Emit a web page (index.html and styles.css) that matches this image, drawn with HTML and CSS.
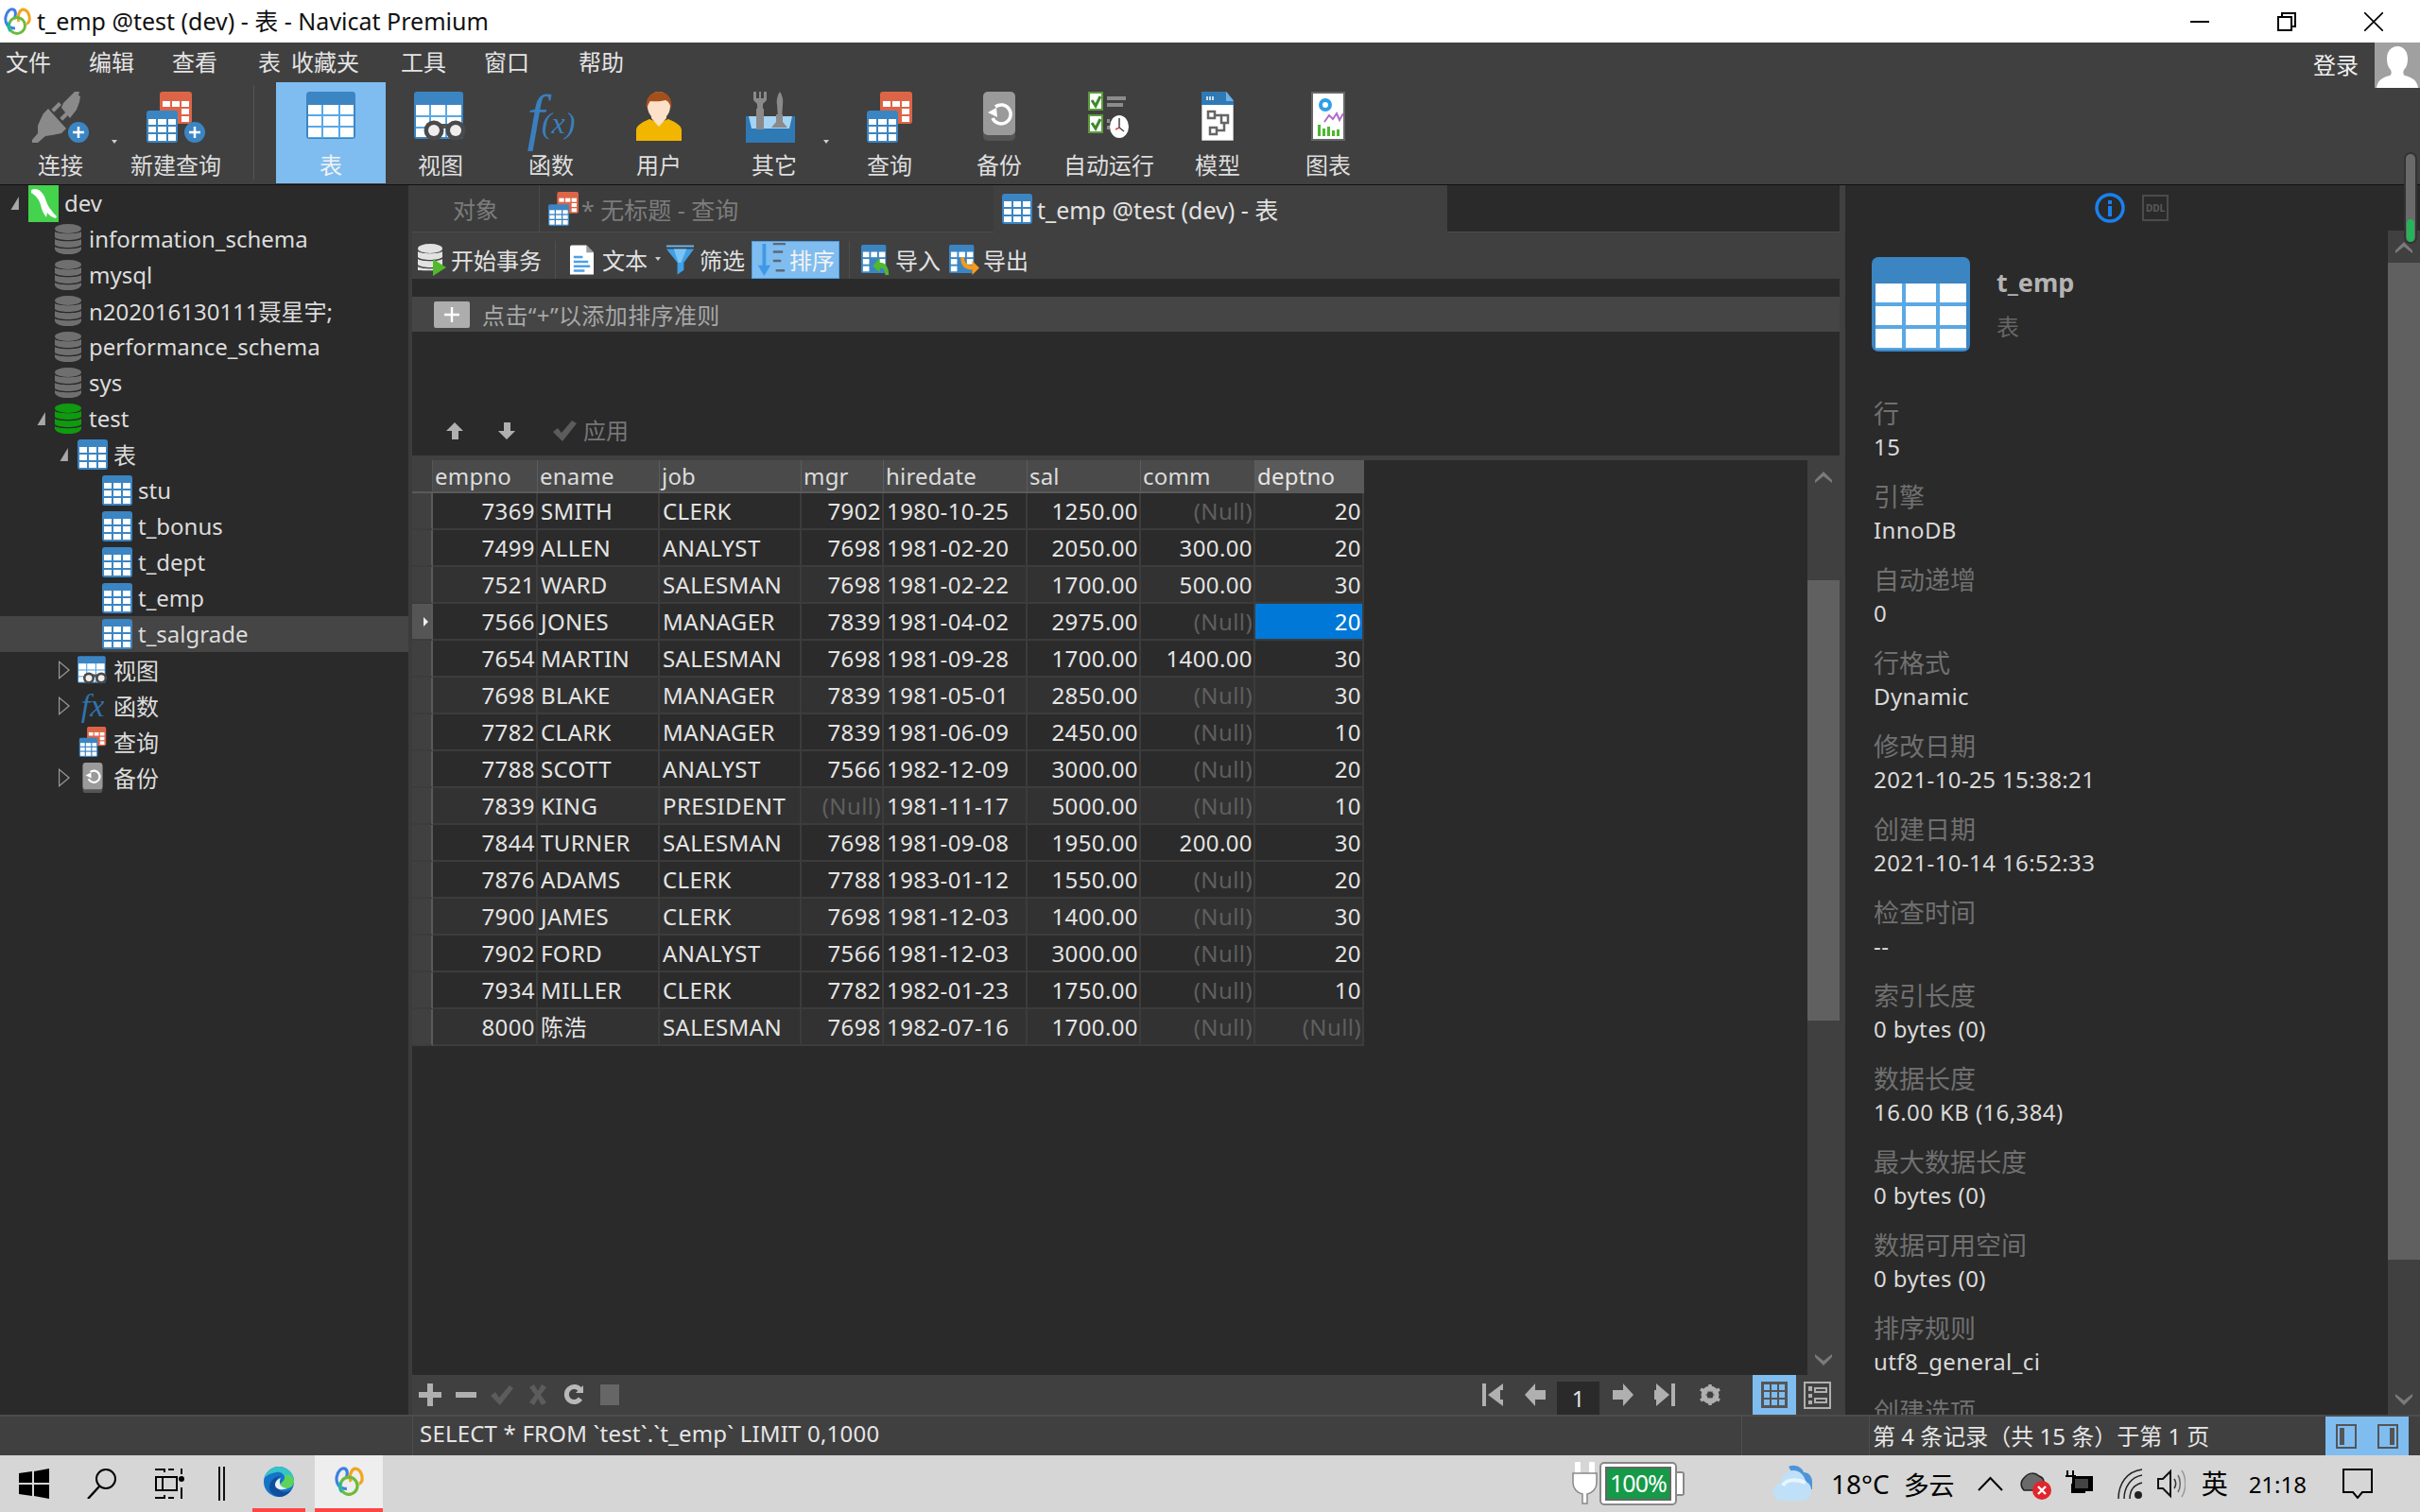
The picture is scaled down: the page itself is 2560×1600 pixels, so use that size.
FILE: index.html
```html
<!DOCTYPE html>
<html lang="zh">
<head>
<meta charset="utf-8">
<title>t_emp @test (dev) - 表 - Navicat Premium</title>
<link rel="stylesheet" href="styles.css">
</head>
<body>
<svg class="sprite" xmlns="http://www.w3.org/2000/svg">
  <symbol id="tbl" viewBox="0 0 32 32"><rect width="32" height="32" rx="3" fill="#3b85c3"/><g fill="#fff"><rect x="2" y="8" width="8" height="6"/><rect x="12" y="8" width="8" height="6"/><rect x="22" y="8" width="8" height="6"/><rect x="2" y="16" width="8" height="6"/><rect x="12" y="16" width="8" height="6"/><rect x="22" y="16" width="8" height="6"/><rect x="2" y="24" width="8" height="6"/><rect x="12" y="24" width="8" height="6"/><rect x="22" y="24" width="8" height="6"/></g></symbol>
  <symbol id="tblL" viewBox="0 0 104 100"><rect width="104" height="100" rx="7" fill="#3b85c3"/><rect x="4" y="28" width="96" height="70" fill="#5aa8e4"/><g fill="#fff"><rect x="4" y="28" width="28" height="20"/><rect x="36" y="28" width="32" height="20"/><rect x="72" y="28" width="28" height="20"/><rect x="4" y="52" width="28" height="20"/><rect x="36" y="52" width="32" height="20"/><rect x="72" y="52" width="28" height="20"/><rect x="4" y="76" width="28" height="20"/><rect x="36" y="76" width="32" height="20"/><rect x="72" y="76" width="28" height="20"/></g></symbol>
  <symbol id="view" viewBox="0 0 56 52"><rect width="52" height="50" rx="3" fill="#3b85c3"/><rect x="2" y="14" width="48" height="34" fill="#5aa8e4"/><g fill="#fff"><rect x="2" y="14" width="14" height="11"/><rect x="18" y="14" width="15" height="11"/><rect x="35" y="14" width="15" height="11"/><rect x="2" y="27" width="14" height="10"/><rect x="18" y="27" width="15" height="10"/><rect x="35" y="27" width="15" height="10"/><rect x="2" y="39" width="14" height="9"/><rect x="18" y="39" width="15" height="9"/><rect x="35" y="39" width="15" height="9"/></g><rect x="26" y="34" width="10" height="5" fill="#555"/><circle cx="21" cy="41" r="10.500" fill="#4a4a4a"/><circle cx="44" cy="41" r="10.500" fill="#4a4a4a"/><circle cx="21" cy="41" r="6" fill="#eee"/><circle cx="44" cy="41" r="6" fill="#eee"/></symbol>
  <symbol id="query" viewBox="0 0 48 54"><rect x="14" width="34" height="34" rx="3" fill="#dd6547"/><g fill="#fff"><rect x="17" y="10" width="8" height="6"/><rect x="27" y="10" width="8" height="6"/><rect x="37" y="10" width="8" height="6"/><rect x="37" y="18" width="8" height="6"/><rect x="37" y="26" width="8" height="6"/></g><rect y="20" width="33" height="34" rx="3" fill="#3b85c3"/><g fill="#fff"><rect x="2" y="29" width="8" height="6"/><rect x="12" y="29" width="9" height="6"/><rect x="23" y="29" width="8" height="6"/><rect x="2" y="37" width="8" height="6"/><rect x="12" y="37" width="9" height="6"/><rect x="23" y="37" width="8" height="6"/><rect x="2" y="45" width="8" height="7"/><rect x="12" y="45" width="9" height="7"/><rect x="23" y="45" width="8" height="7"/></g></symbol>
  <symbol id="newq" viewBox="0 0 62 54"><use href="#query" width="48" height="54"/><circle cx="51" cy="43" r="11" fill="#3b85c3"/><path d="M51 37v12M45 43h12" stroke="#fff" stroke-width="2.500"/></symbol>
  <symbol id="conn" viewBox="0 0 60 54"><g fill="#8a8a8a"><path d="M31 17l2-5 12-12h5l-1 4 2 1-1 6-3 8-7 9z"/><rect x="24" y="11" width="4" height="11" transform="rotate(45 26 16)"/><rect x="33" y="20" width="4" height="11" transform="rotate(45 35 25)"/><path d="M17 18l19 21-5 5-5 1-5 1-7 1-8 7H0v-3l6-7v-8l3-7 3-6z"/></g><circle cx="49" cy="43" r="11" fill="#3b85c3"/><path d="M49 37v12M43 43h12" stroke="#fff" stroke-width="2.500"/></symbol>
  <symbol id="user" viewBox="0 0 48 52"><path d="M0 52V41c0-5 5-8 14-12l10 4 10-4c9 4 14 7 14 12v11z" fill="#f2b600"/><path d="M16 18h16v10l-8 9-8-9z" fill="#fde0c8"/><ellipse cx="24" cy="15" rx="12" ry="15" fill="#fde0c8"/><path d="M11 19C9 6 16 0 24 0s15 6 13 19c-1-6-3-9-6-10-6 2-15 1-16 1-2 2-3 5-4 9z" fill="#a5501c"/></symbol>
  <symbol id="tools" viewBox="0 0 52 54"><path d="M8 0v9l4 4v26h6V13l4-4V0l-3 0v7h-3V0h-2v7h-3V0z" fill="#8a8a8a"/><path d="M33 14c-1-6 1-11 3-14 2 3 4 8 3 14l-1 14h-4z" fill="#8a8a8a"/><path d="M0 26h52v28H0z" fill="#2f79b5"/><path d="M3 26h46l-3 13H6z" fill="#a5d3f3"/><path d="M11 18h8v22h-8zM32 24h7v8l5 6H27l5-6z" fill="#8a8a8a"/></symbol>
  <symbol id="backup" viewBox="0 0 34 52"><rect y="2" width="34" height="50" rx="5" fill="#555"/><rect width="34" height="46" rx="5" fill="#9a9a9a"/><path d="M13 16a10 10 0 1 1-3 12" fill="none" stroke="#fff" stroke-width="3.500"/><path d="M5 22l9-5 1 10z" fill="#fff"/></symbol>
  <symbol id="auto" viewBox="0 0 44 52"><g fill="#fff" stroke="#5a9a3c" stroke-width="2"><rect x="1" y="1" width="14" height="18"/><rect x="1" y="25" width="14" height="18"/></g><path d="M4 9l4 6 5-10M4 33l4 6 5-10" fill="none" stroke="#3c8a2c" stroke-width="3"/><path d="M20 5h20v4H20zM20 12h17v4H20zM20 29h3v4h-3zM20 36h3v4h-3z" fill="#8c8c8c"/><ellipse cx="33" cy="37" rx="10" ry="12" fill="#fff"/><path d="M33 28v10l5 4" fill="none" stroke="#444" stroke-width="1.500"/><path d="M33 38l-4 2" stroke="#e0473c" stroke-width="1.500"/></symbol>
  <symbol id="model" viewBox="0 0 34 52"><path d="M0 0h26l8 10v42H0z" fill="#fff" stroke="#777" stroke-width="1"/><path d="M0 0h26l8 10v4H0z" fill="#2f79b5"/><path d="M26 0l8 10h-8z" fill="#6eb2ea"/><path d="M6 5v4M9 5v4M12 5v4" stroke="#fff" stroke-width="1.500"/><g fill="none" stroke="#666" stroke-width="2.500"><rect x="7" y="21" width="7" height="7"/><rect x="21" y="25" width="7" height="8"/><rect x="9" y="38" width="7" height="7"/><path d="M14 25h7M24 33v8h-8"/></g></symbol>
  <symbol id="chart" viewBox="0 0 36 52"><rect x="1" y="1" width="34" height="50" fill="#fff" stroke="#666" stroke-width="2"/><circle cx="15" cy="14" r="5" fill="none" stroke="#2f9fe8" stroke-width="4"/><path d="M14 32l5-7 4 4 4-6 3 7 4-7" fill="none" stroke="#b06cc8" stroke-width="2"/><g fill="#4cb82c"><rect x="7" y="35" width="3" height="12"/><rect x="12" y="39" width="3" height="8"/><rect x="17" y="37" width="3" height="10"/><rect x="22" y="41" width="3" height="6"/><rect x="27" y="40" width="3" height="7"/></g></symbol>
  <symbol id="dolphin" viewBox="0 0 32 40"><rect width="32" height="40" fill="#45d24d"/><path d="M3 6c6-3 11 1 14 7 2 5 3 9 7 14 2 3 4 5 6 7l-1 2c-4-1-7-3-9-6l-1 5c-3-4-5-8-6-13C12 17 8 12 3 9z" fill="#fff"/></symbol>
  <symbol id="dbg" viewBox="0 0 28 32"><g fill="#6f6f6f"><ellipse cx="14" cy="5" rx="14" ry="5"/><path d="M0 8c3 3 25 3 28 0v6c-3 4-25 4-28 0zM0 16c3 3 25 3 28 0v6c-3 4-25 4-28 0zM0 24c3 3 25 3 28 0v3c-3 7-25 7-28 0z"/></g></symbol>
  <symbol id="dbgreen" viewBox="0 0 28 32"><g fill="#0f9a10"><ellipse cx="14" cy="5" rx="14" ry="5"/><path d="M0 8c3 3 25 3 28 0v6c-3 4-25 4-28 0zM0 16c3 3 25 3 28 0v6c-3 4-25 4-28 0zM0 24c3 3 25 3 28 0v3c-3 7-25 7-28 0z"/></g></symbol>
  <symbol id="begin" viewBox="0 0 30 34"><g fill="#e2e2e2"><ellipse cx="13" cy="5" rx="13" ry="5"/><path d="M0 8c3 3 23 3 26 0v6c-3 4-23 4-26 0zM0 16c3 3 23 3 26 0v6c-3 4-23 4-26 0zM0 24c3 3 23 3 26 0c0 3-3 5-26 4z"/></g><path d="M16 16l14 9-14 9z" fill="#52b82c"/></symbol>
  <symbol id="doc" viewBox="0 0 26 32"><path d="M0 2a2 2 0 0 1 2-2h16l8 8v24H0z" fill="#fff"/><path d="M18 0l8 8h-8z" fill="#9a9a9a"/><path d="M4 13h10M4 18h16M4 23h18M4 28h12" stroke="#4e9fe6" stroke-width="2.600"/></symbol>
  <symbol id="funnel" viewBox="0 0 32 32"><path d="M1 0h30v2H1z" fill="#6ab4ee"/><path d="M1 4h30L20 19v8l-7 5V19z" fill="#3ea0e8"/><path d="M9 4h14l-6 15h-3z" fill="#7cc3f5"/></symbol>
  <symbol id="sort" viewBox="0 0 34 36"><path d="M8 0h4v24h5L10 36 3 24h5z" fill="#3f99e6"/><path d="M20 0h14M20 9h11M20 19h9M23 30h10" stroke="#5b6a78" stroke-width="2.600"/></symbol>
  <symbol id="imp" viewBox="0 0 34 34"><rect width="28" height="32" rx="2" fill="#3b85c3"/><g fill="#fff"><rect x="2" y="8" width="7" height="6"/><rect x="11" y="8" width="7" height="6"/><rect x="20" y="8" width="7" height="6"/><rect x="2" y="16" width="7" height="6"/><rect x="20" y="16" width="7" height="6"/><rect x="2" y="24" width="7" height="6"/></g><path d="M13 24l8-9v5c6 0 10 5 10 14h-4c0-5-1-8-6-8v5z" fill="#52b82c"/></symbol>
  <symbol id="exp" viewBox="0 0 34 34"><rect width="28" height="32" rx="2" fill="#3b85c3"/><g fill="#fff"><rect x="2" y="8" width="7" height="6"/><rect x="11" y="8" width="7" height="6"/><rect x="20" y="8" width="7" height="6"/><rect x="2" y="16" width="7" height="6"/><rect x="20" y="16" width="7" height="6"/><rect x="2" y="24" width="7" height="6"/></g><path d="M13 14h4c0 6 3 9 9 9v-5l8 8-8 8v-6c-9 0-13-5-13-14z" fill="#f49a1c"/></symbol>
  <symbol id="logo" viewBox="0 0 30 30"><g fill="none" stroke-width="3"><path d="M13 22C5 22 2 16 3 10 4 4 8 1 11 2c3 1 3 6 1 10" stroke="#3f80e0"/><path d="M17 15c-2-5 0-12 4-13 5 0 8 6 7 12-1 2-2 3-3 3" stroke="#f2a51d"/><circle cx="15" cy="19" r="8.500" stroke="#6cbb3c"/></g><path d="M8 25a8.500 8.500 0 0 1-1-9" stroke="#23b5a5" stroke-width="3" fill="none"/></symbol>
  <symbol id="edge" viewBox="0 0 32 32"><circle cx="16" cy="16" r="16" fill="#1573c8"/><path d="M1 12C3 4 9 0 16 0c9 0 16 7 16 15 0 5-4 8-8 8-4 0-6-2-6-4 0-3 4-3 4-7 0-4-4-7-9-6-6 1-10 3-12 6z" fill="#36c4c8"/><path d="M32 15c0 5-4 8-8 8-4 0-6-2-6-4 0-3 4-3 4-7C22 6 30 8 32 15z" fill="#5fd25a"/><path d="M6 22c0-7 6-12 12-12-5 3-7 8-4 12 3 5 9 6 15 3-3 4-7 7-13 7C10 30 6 27 6 22z" fill="#0f4e9a"/><path d="M12 19c0-3 3-6 6-7-2 3-1 7 1 9 2 1 4 2 6 2-4 2-13 2-13-4z" fill="#e8f2f4"/></symbol>
</svg>

<div class="app">
  <header class="titlebar">
    <svg class="title-logo"><use href="#logo"/></svg>
    <span class="title-text">t_emp @test (dev) - 表 - Navicat Premium</span>
    <div class="win-ctrls">
      <div class="win-btn"><svg width="20" height="20" viewBox="0 0 20 20"><path d="M0 10h20" stroke="#000" stroke-width="2"/></svg></div>
      <div class="win-btn"><svg width="20" height="20" viewBox="0 0 20 20"><path d="M1 5h14v14H1zM5 5V1h14v14h-4" fill="none" stroke="#000" stroke-width="2"/></svg></div>
      <div class="win-btn"><svg width="20" height="20" viewBox="0 0 20 20"><path d="M0 0l20 20M20 0L0 20" stroke="#000" stroke-width="1.600"/></svg></div>
    </div>
  </header>

  <section class="ribbon">
    <div class="ribbon-main">
      <nav class="menubar">
        <span class="menu-item">文件</span>
        <span class="menu-item">编辑</span>
        <span class="menu-item">查看</span>
        <span class="menu-item m43">表</span>
        <span class="menu-item m11">收藏夹</span>
        <span class="menu-item m44">工具</span>
        <span class="menu-item">窗口</span>
        <span class="menu-item m52">帮助</span>
      </nav>
      <div class="toolbar">
        <div class="tool w122"><svg class="ti ti-conn"><use href="#conn"/></svg><span>连接</span><i class="drop drop-a"></i></div>
        <div class="tool w122"><svg class="ti ti-newq"><use href="#newq"/></svg><span>新建查询</span></div>
        <div class="tool-sep"></div>
        <div class="tool w116 active"><svg class="ti ti-tbl"><use href="#tblL"/></svg><span>表</span></div>
        <div class="tool w116"><svg class="ti ti-view"><use href="#view"/></svg><span>视图</span></div>
        <div class="tool w118"><div class="ti ti-fx"><span class="fx-f">f</span><span class="fx-x">(x)</span></div><span>函数</span></div>
        <div class="tool w110"><svg class="ti ti-user"><use href="#user"/></svg><span>用户</span></div>
        <div class="tool w134"><svg class="ti ti-tools"><use href="#tools"/></svg><span>其它</span><i class="drop drop-b"></i></div>
        <div class="tool w110"><svg class="ti ti-query"><use href="#query"/></svg><span>查询</span></div>
        <div class="tool w122"><svg class="ti ti-backup"><use href="#backup"/></svg><span>备份</span></div>
        <div class="tool w110"><svg class="ti ti-auto"><use href="#auto"/></svg><span>自动运行</span></div>
        <div class="tool w120"><svg class="ti ti-model"><use href="#model"/></svg><span>模型</span></div>
        <div class="tool w114"><svg class="ti ti-chart"><use href="#chart"/></svg><span>图表</span></div>
      </div>
    </div>
    <div class="login">
      <span class="login-text">登录</span>
      <div class="avatar"><svg width="48" height="48" viewBox="0 0 48 48"><path d="M2 48c1-8 6-11 14-13 2-1 2-4 1-6-3-3-4-7-4-12 0-8 5-13 11-13s11 5 11 13c0 5-1 9-4 12-1 2-1 5 1 6 8 2 13 5 14 13z" fill="#fff"/></svg></div>
    </div>
  </section>

  <div class="workspace">
    <aside class="tree">
      <div class="tr d0"><i class="exp-open"></i><svg class="tic tic-dev"><use href="#dolphin"/></svg><span>dev</span></div>
      <div class="tr d1"><i class="exp-none"></i><svg class="tic tic-db"><use href="#dbg"/></svg><span>information_schema</span></div>
      <div class="tr d1"><i class="exp-none"></i><svg class="tic tic-db"><use href="#dbg"/></svg><span>mysql</span></div>
      <div class="tr d1"><i class="exp-none"></i><svg class="tic tic-db"><use href="#dbg"/></svg><span>n202016130111聂星宇;</span></div>
      <div class="tr d1"><i class="exp-none"></i><svg class="tic tic-db"><use href="#dbg"/></svg><span>performance_schema</span></div>
      <div class="tr d1"><i class="exp-none"></i><svg class="tic tic-db"><use href="#dbg"/></svg><span>sys</span></div>
      <div class="tr d1"><i class="exp-open"></i><svg class="tic tic-db"><use href="#dbgreen"/></svg><span>test</span></div>
      <div class="tr d2"><i class="exp-open"></i><svg class="tic"><use href="#tbl"/></svg><span>表</span></div>
      <div class="tr d3"><svg class="tic"><use href="#tbl"/></svg><span>stu</span></div>
      <div class="tr d3"><svg class="tic"><use href="#tbl"/></svg><span>t_bonus</span></div>
      <div class="tr d3"><svg class="tic"><use href="#tbl"/></svg><span>t_dept</span></div>
      <div class="tr d3"><svg class="tic"><use href="#tbl"/></svg><span>t_emp</span></div>
      <div class="tr d3 sel"><svg class="tic"><use href="#tbl"/></svg><span>t_salgrade</span></div>
      <div class="tr d2"><i class="exp-closed"></i><svg class="tic"><use href="#view"/></svg><span>视图</span></div>
      <div class="tr d2"><i class="exp-closed"></i><div class="tic tic-fx"><span class="fxs">fx</span></div><span>函数</span></div>
      <div class="tr d2"><i class="exp-none"></i><svg class="tic"><use href="#query"/></svg><span>查询</span></div>
      <div class="tr d2"><i class="exp-closed"></i><svg class="tic tic-bk"><use href="#backup"/></svg><span>备份</span></div>
    </aside>
    <div class="split-a"></div>
    <main class="main">
      <div class="tabs">
        <div class="tab tab-obj">对象</div>
        <div class="tab tab-q"><svg class="tab-ic"><use href="#query"/></svg><span>* 无标题 - 查询</span></div>
        <div class="tab tab-cur"><svg class="tab-ic"><use href="#tbl"/></svg><span>t_emp @test (dev) - 表</span></div>
      </div>
      <div class="subbar">
        <div class="sb sb-begin"><svg class="sbi sbi-begin"><use href="#begin"/></svg><span>开始事务</span></div>
        <div class="sb-sep"></div>
        <div class="sb sb-text"><svg class="sbi sbi-doc"><use href="#doc"/></svg><span>文本</span><i class="drop drop-c"></i></div>
        <div class="sb sb-filter"><svg class="sbi sbi-fun"><use href="#funnel"/></svg><span>筛选</span></div>
        <div class="sb sb-sort"><svg class="sbi sbi-sort"><use href="#sort"/></svg><span>排序</span></div>
        <div class="sb-sep sep2"></div>
        <div class="sb sb-imp"><svg class="sbi sbi-tb"><use href="#imp"/></svg><span>导入</span></div>
        <div class="sb sb-exp"><svg class="sbi sbi-tb"><use href="#exp"/></svg><span>导出</span></div>
      </div>
      <div class="gap-dark"></div>
      <div class="sortbar">
        <div class="sort-add"><svg width="20" height="20" viewBox="0 0 20 20"><path d="M10 2v16M2 10h16" stroke="#fff" stroke-width="2.400"/></svg></div>
        <span class="sort-hint">点击“+”以添加排序准则</span>
      </div>
      <div class="sortspace">
        <div class="apply-row">
          <svg class="ar-up" width="18" height="18" viewBox="0 0 18 18"><path d="M9 0l9 9h-5v9H6V9H0z" fill="#b0b0b0"/></svg>
          <svg class="ar-down" width="18" height="18" viewBox="0 0 18 18"><path d="M9 18l9-9h-5V0H6v9H0z" fill="#b0b0b0"/></svg>
          <svg class="ar-check" width="26" height="22" viewBox="0 0 26 22"><path d="M1 12l5-4 4 5L21 0l5 3-15 19z" fill="#5c5c5c"/></svg>
          <span class="apply-text">应用</span>
        </div>
      </div>
      <div class="divider"></div>
      <div class="gridwrap">
        <div class="gridarea">
          <table class="grid">
            <colgroup><col class="c0"><col class="c1"><col class="c2"><col class="c3"><col class="c4"><col class="c5"><col class="c6"><col class="c7"><col class="c8"></colgroup>
            <thead><tr><th class="rh"></th><th>empno</th><th>ename</th><th>job</th><th>mgr</th><th>hiredate</th><th>sal</th><th>comm</th><th class="th-sel">deptno</th></tr></thead>
            <tbody>
              <tr><td class="rh"></td><td class="n">7369</td><td>SMITH</td><td>CLERK</td><td class="n">7902</td><td>1980-10-25</td><td class="n">1250.00</td><td class="n null">(Null)</td><td class="n">20</td></tr>
              <tr><td class="rh"></td><td class="n">7499</td><td>ALLEN</td><td>ANALYST</td><td class="n">7698</td><td>1981-02-20</td><td class="n">2050.00</td><td class="n">300.00</td><td class="n">20</td></tr>
              <tr><td class="rh"></td><td class="n">7521</td><td>WARD</td><td>SALESMAN</td><td class="n">7698</td><td>1981-02-22</td><td class="n">1700.00</td><td class="n">500.00</td><td class="n">30</td></tr>
              <tr class="cur"><td class="rh"><i class="row-mark"></i></td><td class="n">7566</td><td>JONES</td><td>MANAGER</td><td class="n">7839</td><td>1981-04-02</td><td class="n">2975.00</td><td class="n null">(Null)</td><td class="n cell-sel">20</td></tr>
              <tr><td class="rh"></td><td class="n">7654</td><td>MARTIN</td><td>SALESMAN</td><td class="n">7698</td><td>1981-09-28</td><td class="n">1700.00</td><td class="n">1400.00</td><td class="n">30</td></tr>
              <tr><td class="rh"></td><td class="n">7698</td><td>BLAKE</td><td>MANAGER</td><td class="n">7839</td><td>1981-05-01</td><td class="n">2850.00</td><td class="n null">(Null)</td><td class="n">30</td></tr>
              <tr><td class="rh"></td><td class="n">7782</td><td>CLARK</td><td>MANAGER</td><td class="n">7839</td><td>1981-06-09</td><td class="n">2450.00</td><td class="n null">(Null)</td><td class="n">10</td></tr>
              <tr><td class="rh"></td><td class="n">7788</td><td>SCOTT</td><td>ANALYST</td><td class="n">7566</td><td>1982-12-09</td><td class="n">3000.00</td><td class="n null">(Null)</td><td class="n">20</td></tr>
              <tr><td class="rh"></td><td class="n">7839</td><td>KING</td><td>PRESIDENT</td><td class="n null">(Null)</td><td>1981-11-17</td><td class="n">5000.00</td><td class="n null">(Null)</td><td class="n">10</td></tr>
              <tr><td class="rh"></td><td class="n">7844</td><td>TURNER</td><td>SALESMAN</td><td class="n">7698</td><td>1981-09-08</td><td class="n">1950.00</td><td class="n">200.00</td><td class="n">30</td></tr>
              <tr><td class="rh"></td><td class="n">7876</td><td>ADAMS</td><td>CLERK</td><td class="n">7788</td><td>1983-01-12</td><td class="n">1550.00</td><td class="n null">(Null)</td><td class="n">20</td></tr>
              <tr><td class="rh"></td><td class="n">7900</td><td>JAMES</td><td>CLERK</td><td class="n">7698</td><td>1981-12-03</td><td class="n">1400.00</td><td class="n null">(Null)</td><td class="n">30</td></tr>
              <tr><td class="rh"></td><td class="n">7902</td><td>FORD</td><td>ANALYST</td><td class="n">7566</td><td>1981-12-03</td><td class="n">3000.00</td><td class="n null">(Null)</td><td class="n">20</td></tr>
              <tr><td class="rh"></td><td class="n">7934</td><td>MILLER</td><td>CLERK</td><td class="n">7782</td><td>1982-01-23</td><td class="n">1750.00</td><td class="n null">(Null)</td><td class="n">10</td></tr>
              <tr><td class="rh"></td><td class="n">8000</td><td>陈浩</td><td>SALESMAN</td><td class="n">7698</td><td>1982-07-16</td><td class="n">1700.00</td><td class="n null">(Null)</td><td class="n null">(Null)</td></tr>
            </tbody>
          </table>
        </div>
        <div class="vscroll">
          <svg class="sa-up" width="18" height="12" viewBox="0 0 18 12"><path d="M9 0l9 9v3L9 5 0 12V9z" fill="#7a7a7a"/></svg>
          <div class="vthumb"></div>
          <svg class="sa-down" width="18" height="12" viewBox="0 0 18 12"><path d="M9 12l9-9V0L9 7 0 0v3z" fill="#7a7a7a"/></svg>
        </div>
      </div>
      <div class="gridfoot">
        <div class="gf-left">
          <svg class="gf" viewBox="0 0 24 24"><path d="M9 0h6v9h9v6h-9v9H9v-9H0V9h9z" fill="#b0b0b0"/></svg>
          <svg class="gf" viewBox="0 0 24 24"><path d="M1 9h22v6H1z" fill="#b0b0b0"/></svg>
          <svg class="gf" viewBox="0 0 24 24"><path d="M0 13l5-4 4 6L20 2l4 3-14 18z" fill="#5c5c5c"/></svg>
          <svg class="gf" viewBox="0 0 24 24"><path d="M3 4l5-3 4 7 4-7 5 3-6 8 6 8-5 3-4-7-4 7-5-3 6-8z" fill="#5c5c5c"/></svg>
          <svg class="gf" viewBox="0 0 24 24"><path d="M19 16a8 8 0 1 1 0-9" fill="none" stroke="#b8b8b8" stroke-width="5"/><path d="M14 10h8V2z" fill="#b8b8b8"/></svg>
          <svg class="gf" viewBox="0 0 24 24"><path d="M2 1h20v22H2z" fill="#666"/></svg>
        </div>
        <div class="gf-right">
          <svg class="pg" viewBox="0 0 22 24"><path d="M0 0h4v24H0zM6 12L22 0v7h-3v10h3v7z" fill="#b0b0b0"/></svg>
          <svg class="pg m23" viewBox="0 0 22 24"><path d="M11 0v7h11v10H11v7L0 12z" fill="#b0b0b0"/></svg>
          <div class="pagebox">1</div>
          <svg class="pg m14" viewBox="0 0 22 24"><path d="M11 0v7H0v10h11v7l11-12z" fill="#b0b0b0"/></svg>
          <svg class="pg m22" viewBox="0 0 22 24"><path d="M18 0h4v24h-4zM16 12L2 0v7H0v10h2v7z" fill="#b0b0b0"/></svg>
          <svg class="pg m26" viewBox="0 0 22 24"><circle cx="11" cy="12" r="7" fill="none" stroke="#b0b0b0" stroke-width="5"/><path d="M11 1v22M1 6l20 12M21 6L1 18" stroke="#b0b0b0" stroke-width="3.500"/><circle cx="11" cy="12" r="3.500" fill="#404040"/></svg>
          <div class="vw-grid"><svg width="30" height="30" viewBox="0 0 30 30"><path d="M1 1h28v28H1z" fill="#555"/><g fill="#7fbdf0"><rect x="4" y="4" width="6" height="6"/><rect x="12" y="4" width="6" height="6"/><rect x="20" y="4" width="6" height="6"/><rect x="4" y="12" width="6" height="6"/><rect x="12" y="12" width="6" height="6"/><rect x="20" y="12" width="6" height="6"/><rect x="4" y="20" width="6" height="6"/><rect x="12" y="20" width="6" height="6"/><rect x="20" y="20" width="6" height="6"/></g></svg></div>
          <svg class="vw-form" viewBox="0 0 29 29"><rect x="1" y="1" width="27" height="27" fill="none" stroke="#b0b0b0" stroke-width="2"/><path d="M5 5h4v5H5zM5 13h4v4H5zM5 20h4v4H5z" fill="#b0b0b0"/><path d="M12 7h12v4H12zM12 18h12v4H12z" fill="none" stroke="#b0b0b0" stroke-width="2"/></svg>
        </div>
      </div>
    </main>
    <div class="split-b"></div>
    <aside class="info">
      <div class="info-body">
        <div class="info-tabs">
          <svg width="32" height="32" viewBox="0 0 32 32"><circle cx="16" cy="16" r="14" fill="none" stroke="#1a80f0" stroke-width="3.500"/><path d="M14 8h4v4h-4zM14 14h4v11h-4z" fill="#1a80f0"/></svg>
          <div class="ddl">DDL</div>
        </div>
        <div class="info-head">
          <svg class="info-icon"><use href="#tblL"/></svg>
          <div class="info-name"><div class="info-title">t_emp</div><div class="info-type">表</div></div>
        </div>
        <div class="f"><div class="fl">行</div><div class="fv">15</div></div>
        <div class="f"><div class="fl">引擎</div><div class="fv">InnoDB</div></div>
        <div class="f"><div class="fl">自动递增</div><div class="fv">0</div></div>
        <div class="f"><div class="fl">行格式</div><div class="fv">Dynamic</div></div>
        <div class="f"><div class="fl">修改日期</div><div class="fv">2021-10-25 15:38:21</div></div>
        <div class="f"><div class="fl">创建日期</div><div class="fv">2021-10-14 16:52:33</div></div>
        <div class="f"><div class="fl">检查时间</div><div class="fv">--</div></div>
        <div class="f"><div class="fl">索引长度</div><div class="fv">0 bytes (0)</div></div>
        <div class="f"><div class="fl">数据长度</div><div class="fv">16.00 KB (16,384)</div></div>
        <div class="f"><div class="fl">最大数据长度</div><div class="fv">0 bytes (0)</div></div>
        <div class="f"><div class="fl">数据可用空间</div><div class="fv">0 bytes (0)</div></div>
        <div class="f"><div class="fl">排序规则</div><div class="fv">utf8_general_ci</div></div>
        <div class="f"><div class="fl">创建选项</div></div>
      </div>
      <div class="info-scroll">
        <svg class="isa-up" width="18" height="12" viewBox="0 0 18 12"><path d="M9 0l9 9v3L9 5 0 12V9z" fill="#7a7a7a"/></svg>
        <div class="ithumb"></div>
        <svg class="isa-down" width="18" height="12" viewBox="0 0 18 12"><path d="M9 12l9-9V0L9 7 0 0v3z" fill="#7a7a7a"/></svg>
      </div>
    </aside>
  </div>

  <footer class="status">
    <div class="st st-sql">SELECT * FROM `test`.`t_emp` LIMIT 0,1000</div>
    <div class="st st-mid"></div>
    <div class="st st-rec">第 4 条记录（共 15 条）于第 1 页</div>
    <div class="st-btns">
      <svg width="22" height="26" viewBox="0 0 22 26"><rect x="1" y="1" width="20" height="24" fill="none" stroke="#555" stroke-width="2"/><rect x="4" y="4" width="5" height="18" fill="#555"/></svg>
      <svg width="22" height="26" viewBox="0 0 22 26"><rect x="1" y="1" width="20" height="24" fill="none" stroke="#555" stroke-width="2"/><rect x="13" y="4" width="5" height="18" fill="#555"/></svg>
    </div>
  </footer>

  <div class="taskbar">
    <svg class="tk-win" width="32" height="32" viewBox="0 0 32 32"><path d="M0 5l14-2v12H0zM16 3l16-3v15H16zM0 17h14v12L0 27zM16 17h16v15l-16-3z" fill="#000"/></svg>
    <svg class="tk-search" width="32" height="32" viewBox="0 0 32 32"><circle cx="20" cy="11" r="10" fill="none" stroke="#000" stroke-width="2"/><path d="M13 19L1 32" stroke="#000" stroke-width="2.400"/></svg>
    <svg class="tk-view" width="32" height="32" viewBox="0 0 32 32"><path d="M0 1h10v3M14 1h6M0 31h10v-3M14 31h6M1 9h22v14H1z M8 9v14" fill="none" stroke="#000" stroke-width="2"/><circle cx="28" cy="11" r="3" fill="#000"/><path d="M28 0v6M28 20v12" stroke="#000" stroke-width="2"/></svg>
    <div class="tk-bars"></div>
    <div class="tk-btn tk-edge"><svg width="32" height="32"><use href="#edge"/></svg></div>
    <div class="tk-btn tk-nav"><svg width="32" height="32"><use href="#logo"/></svg></div>
    <div class="tray">
      <svg class="tr-plug" width="27" height="46" viewBox="0 0 27 46"><path d="M6 2v10M21 2v10" stroke="#fff" stroke-width="6" stroke-linecap="round"/><path d="M1 12h25v10a12 12 0 0 1-10 12v10h-5V34A12 12 0 0 1 1 22z" fill="#fff" stroke="#888" stroke-width="1.500"/></svg>
      <div class="batt"><span class="batt-fill">100%</span></div>
      <i class="batt-nub"></i>
      <svg class="tr-cloud" width="42" height="40" viewBox="0 0 42 40"><path d="M16 2c6-3 14 0 16 6 5 0 9 4 9 10v8L30 26z" fill="#4d94d8"/><path d="M10 38C3 38 0 33 0 28c0-5 4-9 8-9 1-8 6-13 13-13 7 0 12 5 13 12 4 1 6 5 6 9 0 6-4 11-10 11z" fill="#bfe0f8"/><path d="M10 22c3-6 14-8 24-3" stroke="#e9f5fd" stroke-width="4" fill="none"/></svg>
      <span class="tr-temp">18°C</span>
      <span class="tr-weather">多云</span>
      <svg class="tr-chev" width="27" height="16" viewBox="0 0 27 16"><path d="M1 15L13.500 2 26 15" fill="none" stroke="#000" stroke-width="2"/></svg>
      <svg class="tr-od" width="33" height="34" viewBox="0 0 33 34"><path d="M4 24C0 20 0 14 5 10c4-5 11-5 15-1 3 1 5 3 5 6l-6 9z" fill="#6a6a6a" stroke="#222" stroke-width="1.500"/><circle cx="23" cy="24" r="10" fill="#e0262c"/><path d="M19 20l8 8M27 20l-8 8" stroke="#fff" stroke-width="2.400"/></svg>
      <svg class="tr-pb" width="31" height="28" viewBox="0 0 31 28"><path d="M3 0v6M9 0v6M1 6h10v6l-3 3v8h14" fill="none" stroke="#000" stroke-width="2"/><rect x="8" y="6" width="22" height="16" fill="#000"/><rect x="11" y="9" width="14" height="10" fill="#444"/></svg>
      <svg class="tr-wifi" width="27" height="32" viewBox="0 0 27 32"><g fill="none" stroke="#222" stroke-width="1.500"><path d="M1 32C1 16 10 3 26 1"/><path d="M7 32C7 20 14 9 26 7"/><path d="M13 32c0-9 5-15 13-17"/></g><circle cx="22" cy="28" r="4" fill="#222"/></svg>
      <svg class="tr-vol" width="30" height="34" viewBox="0 0 30 34"><path d="M1 12h5l8-8v26l-8-8H1z" fill="none" stroke="#111" stroke-width="2"/><path d="M18 12c2 3 2 7 0 10" fill="none" stroke="#333" stroke-width="1.500"/><path d="M22 8c3 5 3 13 0 18" fill="none" stroke="#666" stroke-width="1.500"/><path d="M26 3c5 8 5 20 0 28" fill="none" stroke="#999" stroke-width="1.500"/></svg>
      <span class="tr-ime">英</span>
      <span class="tr-time">21:18</span>
      <svg class="tr-note" width="32" height="32" viewBox="0 0 32 32"><path d="M1 1h30v24H21l-5 6-5-6H1z" fill="none" stroke="#000" stroke-width="2"/></svg>
    </div>
  </div>

  <div class="overlay-pill"><div class="overlay-green"></div></div>
</div>
</body>
</html>
```

FILE: styles.css
```css
* { box-sizing: border-box; }
html, body { margin: 0; padding: 0; }
body { width: 2560px; height: 1600px; overflow: hidden; background: #2a2a2a; font-family: "Noto Sans", "Noto Sans CJK SC", sans-serif; font-size: 24px; color: #dcdcdc; }
i { font-style: normal; }
svg { display: block; flex: none; }
.sprite { display: none; }
.app { position: relative; width: 2560px; height: 1600px; display: flex; flex-direction: column; overflow: hidden; }

/* title bar */
.titlebar { height: 45px; background: #fff; display: flex; align-items: center; color: #111; flex: none; }
.title-logo { width: 30px; height: 30px; margin-left: 3px; margin-right: 6px; }
.title-text { font-size: 25px; line-height: 45px; white-space: nowrap; }
.win-ctrls { margin-left: auto; display: flex; padding-right: 3px; }
.win-btn { width: 92px; height: 45px; display: flex; align-items: center; justify-content: center; }

/* ribbon */
.ribbon { height: 151px; background: #404040; border-bottom: 1px solid #111; display: flex; flex: none; }
.ribbon-main { flex: 1; display: flex; flex-direction: column; }
.menubar { height: 42px; display: flex; align-items: center; padding-left: 6px; gap: 40px; }
.menu-item { line-height: 42px; color: #e4e4e4; white-space: nowrap; }
.m43 { margin-left: 3px; }
.m11 { margin-left: -29px; }
.m44 { margin-left: 4px; }
.m52 { margin-left: 12px; }
.toolbar { flex: 1; display: flex; align-items: stretch; padding-left: 3px; }
.tool { position: relative; display: flex; flex-direction: column; align-items: center; height: 107px; padding-top: 10px; color: #dedede; }
.tool > span { position: relative; line-height: 34px; margin-top: auto; margin-bottom: 2px; white-space: nowrap; }
.tool.active { background: #7fbdf0; color: #f2f2f2; }
.w122 { width: 122px; }
.w116 { width: 116px; }
.w118 { width: 118px; }
.w110 { width: 110px; }
.w134 { width: 134px; }
.w120 { width: 120px; }
.w114 { width: 114px; }
.tool-sep { width: 1px; height: 100px; background: #555; margin: 3px 23px 0 21px; }
.ti { display: block; }
.ti-conn { width: 60px; height: 54px; }
.ti-newq { width: 62px; height: 54px; }
.ti-tbl { width: 52px; height: 50px; }
.ti-view { width: 56px; height: 52px; }
.ti-user { width: 48px; height: 52px; }
.ti-tools { width: 52px; height: 54px; margin-right: 8px; }
.ti-query { width: 48px; height: 54px; }
.ti-backup { width: 34px; height: 52px; }
.ti-auto { width: 44px; height: 52px; }
.ti-model { width: 34px; height: 52px; }
.ti-chart { width: 36px; height: 52px; }
.ti-fx { display: flex; align-items: flex-end; height: 54px; color: #3a7fbf; font-family: "Liberation Serif", serif; font-style: italic; }
.fx-f { font-size: 66px; line-height: 54px; }
.fx-x { font-size: 32px; line-height: 42px; margin-left: -3px; }
.drop { display: block; width: 0; height: 0; border-left: 3px solid transparent; border-right: 3px solid transparent; border-top: 4px solid #ccc; }
.drop-a { position: absolute; left: 115px; top: 61px; }
.drop-b { position: absolute; left: 119px; top: 61px; }
.drop-c { margin-left: 8px; margin-bottom: 2px; }
.login { width: 113px; display: flex; align-items: flex-start; }
.login-text { line-height: 48px; color: #f0f0f0; width: 65px; }
.avatar { width: 48px; height: 48px; background: #a0a0a0; }

/* workspace */
.workspace { flex: 1; display: flex; min-height: 0; background: #2a2a2a; }
.tree { width: 432px; flex: none; overflow: hidden; }
.tr { height: 38px; display: flex; align-items: center; white-space: nowrap; color: #dcdcdc; }
.tr > span { padding-bottom: 2px; }
.d0 { padding-left: 8px; }
.d1 { padding-left: 36px; }
.d2 { padding-left: 60px; }
.d3 { padding-left: 108px; }
.sel { background: #454545; }
.exp-none, .exp-open, .exp-closed { display: block; width: 22px; flex: none; height: 14px; }
.exp-open { background: #a8a8a8; clip-path: polygon(85% 0, 85% 100%, 25% 100%); width: 14px; margin-right: 8px; margin-left: 0; }
.exp-closed { width: 12px; height: 20px; margin-left: 2px; margin-right: 8px; border: 0; background: #9a9a9a; clip-path: polygon(0 0, 100% 50%, 0 100%, 0 92%, 84% 50%, 10% 12%, 10% 88%, 0 92%); }
.tic { width: 32px; height: 32px; margin-right: 6px; flex: none; }
.tic-dev { width: 32px; height: 40px; }
.tic-db { width: 28px; margin-right: 8px; }
.tic-bk { width: 26px; margin-left: 3px; margin-right: 9px; }
.tic-fx { display: flex; align-items: center; justify-content: center; }
.fxs { font-family: "Liberation Serif", serif; font-style: italic; font-size: 34px; color: #2f74ad; line-height: 32px; }
.split-a { width: 4px; background: #3c3c3c; flex: none; }
.main { width: 1510px; flex: none; display: flex; flex-direction: column; }
.split-b { width: 6px; background: #404040; flex: none; }

/* tabs */
.tabs { height: 50px; display: flex; background: #2a2a2a; border-bottom: 1px solid #4c4c4c; flex: none; }
.tab { height: 49px; display: flex; align-items: center; background: #3c3c3c; color: #7c7c7c; white-space: nowrap; font-size: 25px; }
.tab-obj { width: 135px; justify-content: center; border-right: 1px solid #4a4a4a; font-size: 24px; }
.tab-q { width: 480px; padding-left: 9px; }
.tab-q .tab-ic { width: 32px; height: 36px; margin-right: 3px; }
.tab-cur { width: 480px; height: 50px; padding-left: 9px; background: #404040; color: #e2e2e2; }
.tab-cur .tab-ic { width: 32px; height: 32px; margin-right: 5px; }

/* sub toolbar */
.subbar { height: 49px; background: #404040; display: flex; align-items: center; padding-top: 8px; flex: none; color: #e2e2e2; }
.sb { display: flex; align-items: center; height: 40px; white-space: nowrap; }
.sbi { margin-right: 5px; }
.sb-begin { margin-left: 6px; }
.sbi-begin { width: 30px; height: 34px; }
.sb-sep { width: 1px; height: 40px; background: #4f4f4f; margin-left: 14px; }
.sb-text { margin-left: 15px; }
.sbi-doc { width: 25px; height: 32px; margin-right: 9px; }
.sb-filter { margin-left: 5px; }
.sbi-fun { width: 31px; height: 32px; }
.sb-sort { margin-left: 7px; width: 93px; background: #7fbdf0; border: 1px solid #4f9fe6; padding-left: 3px; color: #f2f2f2; }
.sbi-sort { width: 32px; height: 36px; margin-right: 4px; }
.sep2 { margin-left: 10px; }
.sb-imp { margin-left: 12px; }
.sb-exp { margin-left: 9px; }
.sbi-tb { width: 32px; height: 34px; margin-right: 4px; }
.gap-dark { height: 19px; background: #2a2a2a; flex: none; }
.sortbar { height: 37px; background: #454545; display: flex; align-items: center; padding-left: 23px; flex: none; }
.sort-add { width: 38px; height: 28px; background: #adadad; display: flex; align-items: center; justify-content: center; border-radius: 2px; }
.sort-hint { margin-left: 13px; color: #a8a8a8; white-space: nowrap; letter-spacing: 0.4px; }
.sortspace { height: 131px; display: flex; flex-direction: column; justify-content: flex-end; flex: none; }
.apply-row { display: flex; align-items: center; height: 44px; padding-bottom: 9px; padding-left: 36px; }
.ar-down { margin-left: 37px; }
.ar-check { margin-left: 39px; }
.apply-text { margin-left: 7px; color: #777; line-height: 34px; }
.divider { height: 5px; background: #404040; flex: none; }

/* grid */
.gridwrap { flex: 1; display: flex; min-height: 0; }
.gridarea { flex: 1; min-width: 0; overflow: hidden; }
.grid { table-layout: fixed; border-collapse: separate; border-spacing: 0; width: 1007px; font-size: 24px; }
.c0 { width: 22px; }
.c1 { width: 111px; }
.c2 { width: 129px; }
.c3 { width: 150px; }
.c4 { width: 87px; }
.c5 { width: 152px; }
.c6 { width: 120px; }
.c7 { width: 121px; }
.c8 { width: 115px; }
.grid th { height: 35px; padding: 1px 2px 0; background: #4a4a4a; font-weight: 400; text-align: left; color: #dcdcdc; border-right: 1px solid #5c5c5c; border-bottom: 2px solid #5a5a5a; line-height: 30px; white-space: nowrap; overflow: hidden; letter-spacing: 0.2px; }
.grid th.th-sel { background: #5a5a5a; border-right: 0; color: #e6e6e6; }
.grid td { height: 39px; padding: 0 3px; background: #2b2b2b; border-right: 2px solid #3c3c3c; border-bottom: 2px solid #3c3c3c; color: #e4e4e4; line-height: 36px; white-space: nowrap; overflow: hidden; letter-spacing: 0.4px; }
.grid tbody tr:nth-child(3n) td { background: #323232; }
.grid .rh, .grid tbody tr:nth-child(3n) td.rh { background: #404040; border-right: 2px solid #5a5a5a; padding: 0; }
.grid th.rh { background: #404040; border-right: 1px solid #555; }
.grid tr.cur td.rh { background: #555; }
.row-mark { display: block; width: 0; height: 0; border-top: 5px solid transparent; border-bottom: 5px solid transparent; border-left: 5px solid #eee; margin-left: 12px; }
.grid td.n { text-align: right; padding-right: 1px; }
.grid td.null { color: #5f5f5f; }
.grid td.cell-sel { background: #0078d7; color: #fff; }
.vscroll { width: 34px; flex: none; background: #404040; display: flex; flex-direction: column; align-items: center; }
.sa-up { margin-top: 12px; }
.vthumb { width: 34px; height: 466px; background: #606060; margin-top: 103px; }
.sa-down { margin-top: auto; margin-bottom: 10px; }
.gridfoot { height: 42px; background: #404040; display: flex; align-items: center; flex: none; }
.gf-left { display: flex; gap: 14px; padding-left: 7px; }
.gf { width: 24px; height: 24px; }
.gf-right { margin-left: auto; display: flex; align-items: center; height: 42px; padding-right: 9px; }
.pg { width: 22px; height: 24px; }
.m14 { margin-left: 14px; }
.m22 { margin-left: 22px; }
.m23 { margin-left: 23px; }
.m26 { margin-left: 26px; }
.pagebox { width: 45px; height: 35px; margin-left: 12px; margin-top: 7px; background: #2a2a2a; text-align: center; line-height: 35px; color: #e4e4e4; }
.vw-grid { width: 46px; height: 42px; margin-left: 34px; background: #7fbdf0; display: flex; align-items: center; justify-content: center; }
.vw-form { width: 29px; height: 29px; margin-left: 8px; }

/* info panel */
.info { flex: 1; display: flex; min-width: 0; background: #2a2a2a; }
.info-body { width: 574px; flex: none; padding-left: 30px; overflow: hidden; }
.info-tabs { height: 48px; display: flex; align-items: center; padding-left: 234px; gap: 18px; }
.ddl { width: 28px; height: 28px; border: 2px solid #4c4c4c; color: #5a5a5a; font-size: 10px; font-weight: 700; line-height: 24px; text-align: center; }
.info-head { height: 175px; padding-top: 28px; display: flex; }
.info-icon { width: 104px; height: 100px; margin-left: -2px; }
.info-name { margin-left: 28px; }
.info-title { font-size: 27px; font-weight: 700; color: #b4b4b4; line-height: 36px; margin-top: 9px; }
.info-type { color: #666; line-height: 36px; margin-top: 11px; }
.f { height: 88px; }
.fl { font-size: 27px; line-height: 38px; color: #707070; white-space: nowrap; }
.fv { line-height: 32px; color: #dadada; white-space: nowrap; letter-spacing: 0.4px; }
.info-scroll { width: 34px; flex: none; margin-top: 48px; background: #404040; display: flex; flex-direction: column; align-items: center; }
.isa-up { margin-top: 12px; margin-bottom: 10px; }
.ithumb { width: 34px; height: 1055px; background: #606060; }
.isa-down { margin-top: auto; margin-bottom: 10px; }

/* status */
.status { height: 43px; background: #404040; border-top: 2px solid #4c4c4c; display: flex; flex: none; color: #e6e6e6; }
.st { height: 41px; line-height: 36px; white-space: nowrap; border-left: 1px solid #4f4f4f; }
.st-sql { margin-left: 436px; width: 1406px; padding-left: 7px; letter-spacing: 0.2px; }
.st-mid { width: 135px; }
.st-rec { width: 483px; padding-left: 3px; line-height: 42px; }
.st-btns { width: 88px; height: 41px; background: #7fbdf0; display: flex; align-items: center; justify-content: space-around; }

/* taskbar */
.taskbar { height: 60px; background: #d6d6d6; display: flex; align-items: center; flex: none; color: #000; padding-left: 20px; }
.tk-search, .tk-view { margin-left: 40px; }
.tk-bars { width: 7px; height: 36px; margin-left: 35px; border-left: 2px solid #111; border-right: 2px solid #111; }
.tk-btn { height: 60px; display: flex; align-items: center; justify-content: center; border-bottom: 4px solid #ff4444; }
.tk-edge { width: 56px; margin-left: 29px; }
.tk-nav { width: 72px; margin-left: 10px; background: #eeeeee; }
.tray { margin-left: auto; display: flex; align-items: center; height: 60px; padding-right: 50px; }
.batt { width: 82px; height: 46px; background: #fff; border: 2px solid #888; border-radius: 5px; padding: 3px 4px; margin-left: 2px; }
.batt-fill { display: block; height: 36px; background: #159a48; border: 2px solid #666; color: #fff; text-align: center; line-height: 31px; font-size: 25px; letter-spacing: -1px; }
.batt-nub { display: block; width: 8px; height: 26px; background: #fff; border: 2px solid #888; border-left: 0; border-radius: 0 3px 3px 0; }
.tr-cloud { margin-left: 94px; }
.tr-temp { margin-left: 19px; font-size: 28px; white-space: nowrap; }
.tr-weather { margin-left: 15px; font-size: 27px; white-space: nowrap; }
.tr-chev { margin-left: 24px; }
.tr-od { margin-left: 18px; }
.tr-pb { margin-left: 14px; }
.tr-wifi { margin-left: 25px; }
.tr-vol { margin-left: 15px; }
.tr-ime { margin-left: 17px; font-size: 28px; line-height: 1; }
.tr-time { margin-left: 22px; font-size: 24px; }
.tr-note { margin-left: 38px; }

.overlay-pill { position: absolute; left: 2545px; top: 163px; width: 10px; height: 93px; border-radius: 5px; background: #6a6a6a; box-shadow: 0 0 0 2px #333; display: flex; align-items: flex-end; }
.overlay-green { width: 8px; margin-left: 1px; height: 24px; border-radius: 4px; background: #27b35a; }
```
